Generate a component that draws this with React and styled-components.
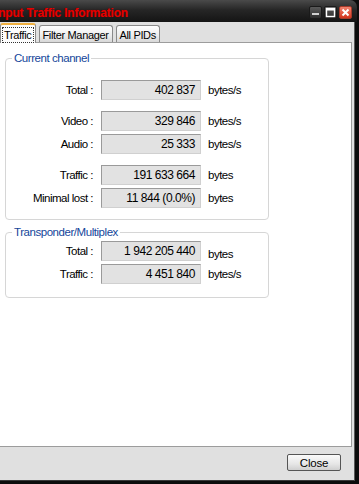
import React from 'react'
import styled, { createGlobalStyle } from 'styled-components'

const channelRows = [
  { label: 'Total :', value: '402 837', unit: 'bytes/s', gap: 0 },
  { label: 'Video :', value: '329 846', unit: 'bytes/s', gap: 11 },
  { label: 'Audio :', value: '25 333', unit: 'bytes/s', gap: 3 },
  { label: 'Traffic :', value: '191 633 664', unit: 'bytes', gap: 11 },
  { label: 'Minimal lost :', value: '11 844 (0.0%)', unit: 'bytes', gap: 3 },
]

const muxRows = [
  { label: 'Total :', value: '1 942 205 440', unit: 'bytes', gap: 0, low: true },
  { label: 'Traffic :', value: '4 451 840', unit: 'bytes/s', gap: 3 },
]

function App() {
  return (
    <Window>
      <GlobalStyle />
      <TitleBar>
        <Title>Input Traffic Information</Title>
        <TitleButtons>
          <TitleButton>
            <svg width="13" height="13" viewBox="0 0 13 13">
              <rect x="3" y="7" width="7" height="2" fill="#cfcfcf" />
            </svg>
          </TitleButton>
          <TitleButton>
            <svg width="13" height="13" viewBox="0 0 13 13">
              <rect x="2.5" y="2.5" width="8" height="8" fill="none" stroke="#fff" strokeWidth="1.4" />
              <rect x="2.5" y="2.5" width="8" height="2" fill="#fff" />
            </svg>
          </TitleButton>
          <TitleButton close>
            <svg width="13" height="13" viewBox="0 0 13 13">
              <path d="M3.5 3.5 L9.5 9.5 M9.5 3.5 L3.5 9.5" stroke="#fff" strokeWidth="2" />
            </svg>
          </TitleButton>
        </TitleButtons>
      </TitleBar>
      <Body>
        <Tabs>
          <Tab active><Focus>Traffic</Focus></Tab>
          <Tab>Filter Manager</Tab>
          <Tab>All PIDs</Tab>
        </Tabs>
        <Panel>
          <Group style={{ height: 162 }}>
            <Legend>Current channel</Legend>
            <Rows top={21}>
              {channelRows.map((r) => (
                <Row key={r.label} gap={r.gap}>
                  <Label>{r.label}</Label>
                  <ValueBox>{r.value}</ValueBox>
                  <Unit>{r.unit}</Unit>
                </Row>
              ))}
            </Rows>
          </Group>
          <Group style={{ height: 66, marginTop: 12 }}>
            <Legend>Transponder/Multiplex</Legend>
            <Rows top={8}>
              {muxRows.map((r) => (
                <Row key={r.label} gap={r.gap}>
                  <Label>{r.label}</Label>
                  <ValueBox>{r.value}</ValueBox>
                  <Unit low={r.low}>{r.unit}</Unit>
                </Row>
              ))}
            </Rows>
          </Group>
        </Panel>
        <Footer>
          <CloseButton>Close</CloseButton>
        </Footer>
      </Body>
    </Window>
  )
}

export default App

const GlobalStyle = createGlobalStyle`
  html, body {
    margin: 0;
    padding: 0;
    background: #000;
    overflow: hidden;
  }
  * {
    box-sizing: border-box;
  }
`;
const Window = styled.div`
  width: 359px;
  height: 484px;
  display: flex;
  flex-direction: column;
  background: #0c0c0c;
  font-family: 'Liberation Sans', Arial, sans-serif;
  font-size: 11px;
  letter-spacing: -0.35px;
  color: #000;
  overflow: hidden;
`;
const TitleBar = styled.div`
  height: 22px;
  flex-shrink: 0;
  display: flex;
  align-items: center;
  justify-content: space-between;
  background: linear-gradient(#4a4a4a, #262626 45%, #141414);
  border-top-right-radius: 7px;
  margin-right: 2px;
`;
const Title = styled.div`
  margin-left: -5px;
  padding-top: 4px;
  color: #e60000;
  font-weight: bold;
  font-size: 12px;
  letter-spacing: -0.2px;
  text-shadow: 0 0 1px #600;
  white-space: nowrap;
`;
const TitleButtons = styled.div`
  display: flex;
  gap: 2px;
  padding-right: 5px;
  padding-top: 3px;
`;
const TitleButton = styled.div`
  width: 13px;
  height: 13px;
  border-radius: 2px;
  display: flex;
  background: ${(p) => (p.close ? 'linear-gradient(#f2836f, #d3341c)' : 'linear-gradient(#5a5a5a, #2c2c2c)')};
  border: 1px solid ${(p) => (p.close ? '#a63a2a' : '#1a1a1a')};
  svg {
    margin: -1px;
  }
`;
const Body = styled.div`
  flex: 1;
  display: flex;
  flex-direction: column;
  background: #e0e0e0;
  margin-right: 4px;
  margin-bottom: 3px;
  border-right: 1px solid #5a5a5a;
  border-bottom: 1px solid #3a3a3a;
`;
const Tabs = styled.div`
  height: 20px;
  display: flex;
  align-items: flex-end;
  gap: 3px;
  padding-top: 2px;
`;
const Tab = styled.div`
  height: ${(p) => (p.active ? '20px' : '17px')};
  padding: ${(p) => (p.active ? '1px 2px 0 2px' : '1px 3px 0')};
  display: flex;
  align-items: center;
  border: 1px solid #8a8a8a;
  border-bottom: none;
  border-radius: 3px 3px 0 0;
  background: ${(p) => (p.active ? '#fdfdfd' : 'linear-gradient(#ffffff, #ececec 60%, #d8d8d8)')};
  border-top: ${(p) => (p.active ? '2px solid #f0b040' : '1px solid #8a8a8a')};
  margin-bottom: ${(p) => (p.active ? '-1px' : '0')};
  position: relative;
  font-size: 11px;
  z-index: ${(p) => (p.active ? 1 : 0)};
`;
const Focus = styled.span`
  outline: 1px dotted #333;
  padding: 0 1px;
  line-height: 14px;
`;
const Panel = styled.div`
  height: 405px;
  background: #fff;
  border: 1px solid #9c9c9c;
  border-left: none;
  margin-right: 2px;
  padding: 15px 0 0 5px;
`;
const Group = styled.div`
  position: relative;
  width: 264px;
  border: 1px solid #d6d6d6;
  border-radius: 4px;
`;
const Legend = styled.div`
  position: absolute;
  top: -8px;
  left: 6px;
  padding: 0 2px;
  background: #fff;
  color: #14469a;
  font-size: 11.5px;
  letter-spacing: -0.45px;
  line-height: 14px;
`;
const Rows = styled.div`
  display: flex;
  flex-direction: column;
  padding-top: ${(p) => p.top}px;
`;
const Row = styled.div`
  display: flex;
  align-items: center;
  margin-top: ${(p) => p.gap}px;
`;
const Label = styled.div`
  width: 88px;
  text-align: right;
  padding-right: 1px;
  font-size: 11.5px;
  letter-spacing: -0.5px;
`;
const ValueBox = styled.div`
  width: 100px;
  height: 20px;
  margin-left: 7px;
  padding-right: 5px;
  display: flex;
  align-items: center;
  justify-content: flex-end;
  background: #e2e2e2;
  border: 1px solid #9a9a9a;
  border-right-color: #d0d0d0;
  border-bottom-color: #d0d0d0;
  font-size: 12px;
  letter-spacing: -0.45px;
`;
const Unit = styled.div`
  margin-left: 7px;
  font-size: 11.5px;
  letter-spacing: -0.5px;
  padding-top: ${(p) => (p.low ? '6px' : '0')};
`;
const Footer = styled.div`
  flex: 1;
  display: flex;
  justify-content: flex-end;
  align-items: center;
  padding-right: 13px;
  padding-bottom: 2px;
`;
const CloseButton = styled.button`
  width: 54px;
  height: 17px;
  padding: 0;
  font-family: 'Liberation Sans', Arial, sans-serif;
  font-size: 11.5px;
  letter-spacing: -0.2px;
  color: #000;
  background: linear-gradient(#fafafa, #e6e6e6 60%, #cfcfcf);
  border: 1px solid #555;
  border-radius: 2px;
`;
